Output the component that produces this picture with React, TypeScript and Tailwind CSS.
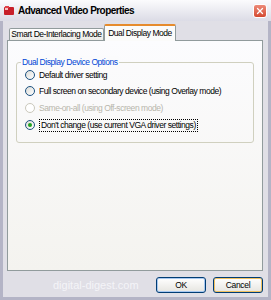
import { X } from 'lucide-react'

const uiFont = { fontFamily: '"Liberation Sans", Arial, sans-serif' }

const options = [
  { label: 'Default driver setting', rowClass: 'mt-[4px]', disabled: false, checked: false },
  { label: 'Full screen on secondary device (using Overlay mode)', rowClass: '', disabled: false, checked: false },
  { label: 'Same-on-all (using Off-screen mode)', rowClass: 'mt-[1px]', disabled: true, checked: false },
  { label: "Don't change (use current VGA driver settings)", rowClass: 'mt-[1px]', disabled: false, checked: true },
]

function Radio({ disabled, checked }: { disabled: boolean; checked: boolean }) {
  return (
    <span
      className={`flex items-center justify-center w-[10px] h-[10px] rounded-full border shrink-0 ${
        disabled ? 'border-[#cac8bb] bg-white' : 'border-[#1c5180] bg-gradient-to-br from-[#dcdcd7] to-white'
      }`}
    >
      {checked && <span className="w-[4px] h-[4px] rounded-full bg-[#21a121]" />}
    </span>
  )
}

export default function App() {
  return (
    <div className="w-[271px] h-[300px] flex flex-col bg-[#b4b4c6] text-black whitespace-nowrap" style={uiFont}>
      {/* Title bar */}
      <div className="h-[21px] flex items-center px-[4px] bg-gradient-to-b from-[#fbfbfd] to-[#dcdce6] shrink-0">
        <svg width="10" height="9" viewBox="0 0 10 9" className="shrink-0">
          <rect x="0" y="1" width="10" height="8" rx="1" fill="#c8202a" />
          <rect x="1" y="0" width="4" height="2" fill="#e04048" />
          <rect x="1" y="2" width="3" height="2" fill="#f5c0c0" />
        </svg>
        <span className="ml-[4px] text-[10px] tracking-[-0.55px] font-bold leading-none">Advanced Video Properties</span>
        <div className="ml-auto w-[14px] h-[14px] rounded-[3px] border border-white bg-gradient-to-b from-[#ec8a78] to-[#d4482f] flex items-center justify-center">
          <X className="w-[10px] h-[10px] text-white" strokeWidth={3} />
        </div>
      </div>

      {/* Body */}
      <div className="flex-1 mx-[3px] mb-[3px] bg-[#e0dfe6] pt-[3px] pl-[4px] pr-[5px] flex flex-col">
        {/* Tabs */}
        <div className="h-[16px] flex items-end ml-[2px] shrink-0 text-[8.5px] tracking-[-0.45px] leading-none">
          <div className="h-[12px] w-[95px] border border-b-0 border-[#919b9c] rounded-t-[2px] bg-gradient-to-b from-white to-[#ecebe6] flex items-center justify-center">
            Smart De-Interlacing Mode
          </div>
          <div className="relative z-10 h-[17px] w-[72px] -mb-px border-x border-[#919b9c] border-t-2 border-t-[#e68b2c] rounded-t-[2px] bg-[#fbfbfa] flex items-center justify-center">
            Dual Display Mode
          </div>
        </div>

        {/* Panel */}
        <div className="h-[231px] border border-[#919b9c] bg-gradient-to-b from-[#fcfcfe] to-[#f4f3ef] px-[8px] pt-[21px] shrink-0 text-[8.5px] tracking-[-0.45px]">
          <div className="relative h-[81px] border border-[#d0d0bf] rounded-[3px] pl-[8px] flex flex-col">
            <span className="absolute left-[4px] top-[-7px] px-[1px] bg-[#fbfbfc] leading-[12px] text-[#0046d5]">
              Dual Display Device Options
            </span>
            {options.map((o) => (
              <div key={o.label} className={`h-[16px] flex items-center gap-[4px] ${o.rowClass}`}>
                <Radio disabled={o.disabled} checked={o.checked} />
                <span
                  className={`leading-[11px] ${o.disabled ? 'text-[#b8b6ac]' : ''} ${
                    o.checked ? 'border border-dotted border-black px-px' : ''
                  }`}
                >
                  {o.label}
                </span>
              </div>
            ))}
          </div>
        </div>

        {/* Footer */}
        <div className="mt-[6px] h-[16px] flex items-center shrink-0">
          <span className="ml-[46px] text-[11px] leading-none text-[#f4f4f8]">digital-digest.com</span>
          <button className="ml-auto w-[50px] h-[16px] rounded-[3px] border border-[#003c74] bg-gradient-to-b from-white to-[#e6e5e0] shadow-[inset_0_0_0_1px_#a8c8f0] text-[8.5px] tracking-[-0.3px] leading-none">
            OK
          </button>
          <button className="ml-[7px] w-[50px] h-[16px] rounded-[3px] border border-[#003c74] bg-gradient-to-b from-white to-[#e6e5e0] shadow-[inset_0_0_0_1px_#f0c060] text-[8.5px] tracking-[-0.3px] leading-none">
            Cancel
          </button>
        </div>
      </div>
    </div>
  )
}
